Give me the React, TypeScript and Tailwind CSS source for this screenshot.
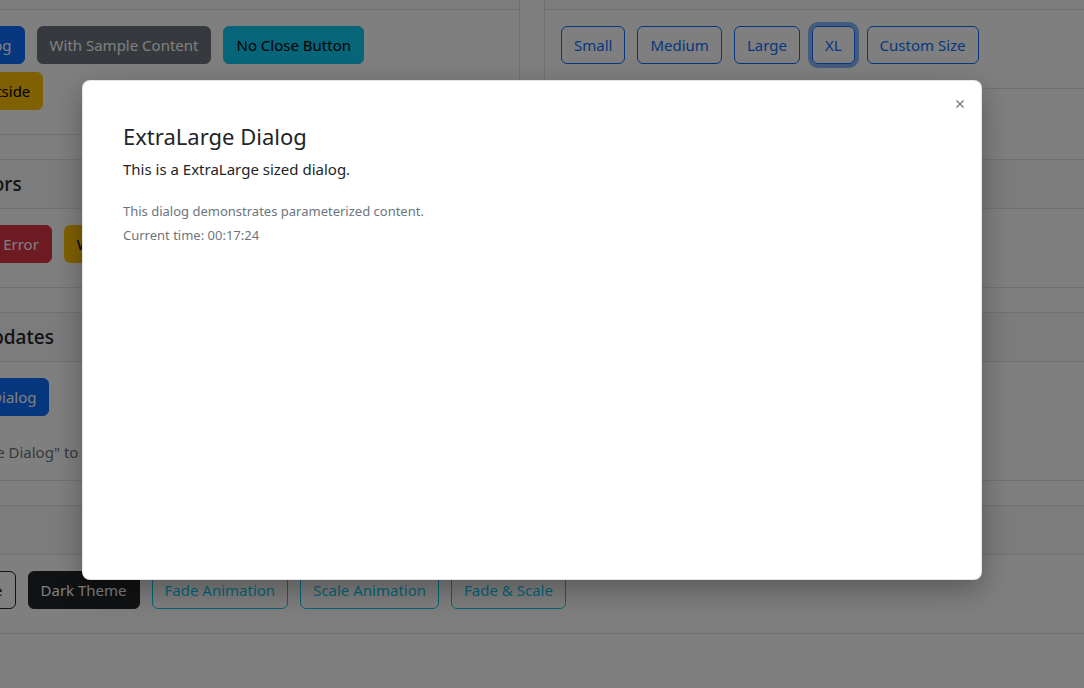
import React from "react";

type Variant =
  | "primary"
  | "secondary"
  | "success"
  | "info"
  | "warning"
  | "danger"
  | "dark"
  | "outline-primary"
  | "outline-info"
  | "outline-dark"
  | "outline-secondary";

const VARIANTS: Record<Variant, string> = {
  primary: "bg-[#0d6efd] border-[#0d6efd] text-white",
  secondary: "bg-[#6c757d] border-[#6c757d] text-white",
  success: "bg-[#198754] border-[#198754] text-white",
  info: "bg-[#0dcaf0] border-[#0dcaf0] text-black",
  warning: "bg-[#ffc107] border-[#ffc107] text-black",
  danger: "bg-[#dc3545] border-[#dc3545] text-white",
  dark: "bg-[#212529] border-[#212529] text-white",
  "outline-primary": "bg-transparent border-[#0d6efd] text-[#0d6efd]",
  "outline-info": "bg-transparent border-[#0dcaf0] text-[#0dcaf0]",
  "outline-dark": "bg-transparent border-[#212529] text-[#212529]",
  "outline-secondary": "bg-transparent border-[#6c757d] text-[#6c757d]",
};

function Btn({
  children,
  variant,
  focused,
}: {
  children: React.ReactNode;
  variant: Variant;
  focused?: boolean;
}) {
  return (
    <button
      type="button"
      className={`shrink-0 whitespace-nowrap rounded-[6px] border px-3 py-1.5 text-[15px] leading-6 ${VARIANTS[variant]} ${
        focused ? "shadow-[0_0_0_4px_rgba(13,110,253,0.5)]" : ""
      }`}
    >
      {children}
    </button>
  );
}

function Card({
  title,
  children,
  className = "",
}: {
  title: string;
  children: React.ReactNode;
  className?: string;
}) {
  return (
    <div className={`overflow-hidden rounded-md border border-[#dee2e6] bg-white ${className}`}>
      <div className="flex h-[49px] items-center border-b border-[#dee2e6] bg-[#f8f9fa] px-4">
        <h5 className="whitespace-nowrap text-[19px] font-medium leading-6">{title}</h5>
      </div>
      <div className="p-4">{children}</div>
    </div>
  );
}

function BtnRow({ children }: { children: React.ReactNode }) {
  return <div className="mb-2 flex flex-wrap gap-x-3 gap-y-2">{children}</div>;
}

export default function App() {
  return (
    <div className="relative h-[688px] w-[1084px] overflow-hidden bg-white font-['Noto_Sans',sans-serif] text-[#212529]">
      {/* page behind the dialog, scrolled */}
      <div className="ml-[-158px] mt-[-40px] flex w-[1380px] flex-col gap-6">
        <div className="grid grid-cols-2 items-start gap-6">
          <Card title="Basic Dialogs">
            <BtnRow>
              <Btn variant="primary">Open Simple Dialog</Btn>
              <Btn variant="secondary">With Sample Content</Btn>
              <Btn variant="info">No Close Button</Btn>
              <Btn variant="warning">Close On Click Outside</Btn>
            </BtnRow>
          </Card>
          <Card title="Dialog Sizes">
            <BtnRow>
              <Btn variant="outline-primary">Small</Btn>
              <Btn variant="outline-primary">Medium</Btn>
              <Btn variant="outline-primary">Large</Btn>
              <Btn variant="outline-primary" focused>
                XL
              </Btn>
              <Btn variant="outline-primary">Custom Size</Btn>
            </BtnRow>
          </Card>
        </div>

        <div className="grid grid-cols-2 items-start gap-6">
          <Card title="Toast Level Colors">
            <BtnRow>
              <Btn variant="success">Confirmation</Btn>
              <Btn variant="danger">Error</Btn>
              <Btn variant="warning">Warning</Btn>
              <Btn variant="info">Information</Btn>
            </BtnRow>
          </Card>
          <Card title="Dialog Results">
            <BtnRow>
              <Btn variant="primary">Confirm Dialog</Btn>
              <Btn variant="secondary">Prompt Dialog</Btn>
            </BtnRow>
          </Card>
        </div>

        <div className="grid grid-cols-2 items-start gap-6">
          <Card title="Live Content Updates">
            <BtnRow>
              <Btn variant="primary">Open Live Timer Dialog</Btn>
            </BtnRow>
            <p className="mt-6 text-[15px] leading-6 text-[#6c757d]">
              Use "Open Live Time Dialog" to open a dialog whose content refreshes every second.
            </p>
          </Card>
          <Card title="Nested Dialogs">
            <BtnRow>
              <Btn variant="success">Open Parent Dialog</Btn>
            </BtnRow>
            <p className="mt-6 text-[15px] leading-6 text-[#6c757d]">
              Dialogs can open other dialogs on top of themselves.
            </p>
          </Card>
        </div>

        <Card title="Appearance">
          <BtnRow>
            <Btn variant="outline-secondary">Default</Btn>
            <Btn variant="outline-dark">White</Btn>
            <Btn variant="dark">Dark Theme</Btn>
            <Btn variant="outline-info">Fade Animation</Btn>
            <Btn variant="outline-info">Scale Animation</Btn>
            <Btn variant="outline-info">Fade &amp; Scale</Btn>
          </BtnRow>
        </Card>
      </div>

      {/* backdrop */}
      <div className="absolute inset-0 bg-black/50" />

      {/* dialog */}
      <div className="absolute left-[82px] top-[80px] h-[500px] w-[900px] rounded-lg border border-black/10 bg-white pl-[40px] pr-10 pt-[41px] shadow-[0_10px_30px_rgba(0,0,0,0.3)]">
        <button
          type="button"
          aria-label="Close"
          className="absolute right-[16px] top-[18px] flex h-[10px] w-[10px] items-center justify-center"
        >
          <svg width="8" height="8" viewBox="0 0 8 8" fill="none">
            <path d="M0.5 0.5L7.5 7.5M7.5 0.5L0.5 7.5" stroke="#6c757d" strokeWidth="1.2" />
          </svg>
        </button>
        <h4 className="mb-[7px] text-[22px] font-normal leading-[28px]">ExtraLarge Dialog</h4>
        <p className="mb-[18px] text-[15px] leading-6">This is a ExtraLarge sized dialog.</p>
        <div className="text-[13px] leading-6 text-[#6c757d]">
          <div>This dialog demonstrates parameterized content.</div>
          <div>Current time: 00:17:24</div>
        </div>
      </div>
    </div>
  );
}
